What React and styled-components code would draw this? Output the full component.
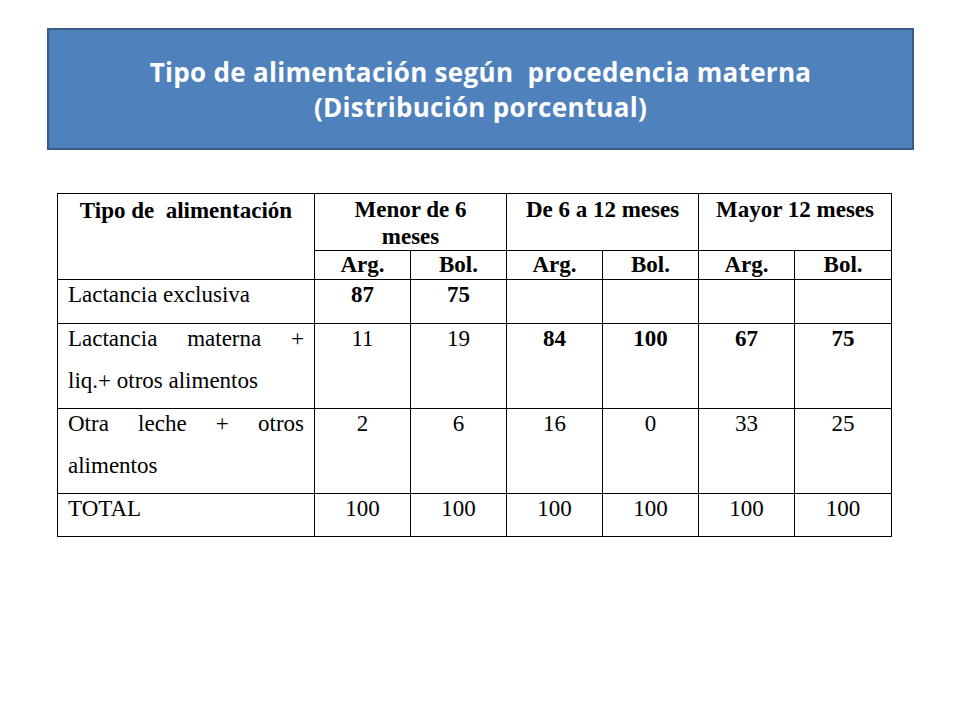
import React from "react";
import styled, { createGlobalStyle } from "styled-components";

const GlobalStyle = createGlobalStyle`
  html, body {
    margin: 0;
    padding: 0;
    background: #ffffff;
  }
`;

const Slide = styled.div`
  width: 960px;
  height: 720px;
  padding: 28px 0 0 47px;
  box-sizing: border-box;
`;

const TitleBox = styled.div`
  width: 867px;
  height: 122px;
  box-sizing: border-box;
  background: #4f81bd;
  border: 2px solid #385d8a;
  display: flex;
  flex-direction: column;
  align-items: center;
  justify-content: center;
  color: #ffffff;
  font-family: "Open Sans", "Liberation Sans", sans-serif;
  font-weight: 700;
  font-size: 26px;
  line-height: 35px;
  letter-spacing: 0.3px;
  padding-top: 2px;
`;

const Table = styled.table`
  margin: 43px 0 0 10px;
  border-collapse: collapse;
  table-layout: fixed;
  width: 834px;
  font-family: "Liberation Serif", "Times New Roman", serif;
  font-size: 23px;
  color: #000;
`;

const Col = styled.col`
  width: ${({ $w }) => $w}px;
`;

const HeadCell = styled.th`
  border: 1px solid #000;
  font-weight: 700;
  text-align: center;
  vertical-align: top;
  padding: ${({ $pad }) => $pad || "3px 4px 0"};
  line-height: 27px;
  height: ${({ $h }) => $h}px;
  box-sizing: border-box;
`;

const Cell = styled.td`
  border: 1px solid #000;
  vertical-align: top;
  text-align: ${({ $left }) => ($left ? "left" : "center")};
  font-weight: ${({ $bold }) => ($bold ? 700 : 400)};
  padding: 0 ${({ $left }) => ($left ? "10px" : "4px")};
  line-height: 30px;
  height: ${({ $h }) => $h}px;
  box-sizing: border-box;
`;

const Line = styled.div`
  height: 42px;
  line-height: 30px;
  text-align: ${({ $justify }) => ($justify ? "justify" : "left")};
  text-align-last: ${({ $justify }) => ($justify ? "justify" : "auto")};
`;

const colWidths = [257, 96, 96, 96, 96, 96, 97];

const rows = [
  {
    label: [["Lactancia exclusiva", false]],
    h: 44,
    values: [
      ["87", true],
      ["75", true],
      ["", false],
      ["", false],
      ["", false],
      ["", false],
    ],
  },
  {
    label: [
      ["Lactancia materna +", true],
      ["liq.+ otros alimentos", false],
    ],
    h: 84,
    values: [
      ["11", false],
      ["19", false],
      ["84", true],
      ["100", true],
      ["67", true],
      ["75", true],
    ],
  },
  {
    label: [
      ["Otra leche + otros", true],
      ["alimentos", false],
    ],
    h: 85,
    values: [
      ["2", false],
      ["6", false],
      ["16", false],
      ["0", false],
      ["33", false],
      ["25", false],
    ],
  },
  {
    label: [["TOTAL", false]],
    h: 43,
    values: [
      ["100", false],
      ["100", false],
      ["100", false],
      ["100", false],
      ["100", false],
      ["100", false],
    ],
  },
];

const groups = ["Menor de 6 meses", "De 6 a 12 meses", "Mayor 12 meses"];

export default function App() {
  return (
    <>
      <GlobalStyle />
      <Slide>
        <TitleBox>
          <div>Tipo de alimentación según&nbsp; procedencia materna</div>
          <div>(Distribución porcentual)</div>
        </TitleBox>
        <Table>
          <colgroup>
            {colWidths.map((w, i) => (
              <Col key={i} $w={w} />
            ))}
          </colgroup>
          <thead>
            <tr>
              <HeadCell rowSpan={2} $h={86}>
                Tipo de&nbsp; alimentación
              </HeadCell>
              {groups.map((g) => (
                <HeadCell key={g} colSpan={2} $h={57} $pad="2px 8px 0">
                  {g}
                </HeadCell>
              ))}
            </tr>
            <tr>
              {[0, 1, 2, 3, 4, 5].map((i) => (
                <HeadCell key={i} $h={29} $pad="0 4px">
                  {i % 2 ? "Bol." : "Arg."}
                </HeadCell>
              ))}
            </tr>
          </thead>
          <tbody>
            {rows.map((row, ri) => (
              <tr key={ri}>
                <Cell $left $h={row.h}>
                  {row.label.length === 1
                    ? row.label[0][0]
                    : row.label.map(([t, j]) => (
                        <Line key={t} $justify={j}>
                          {t}
                        </Line>
                      ))}
                </Cell>
                {row.values.map(([v, b], i) => (
                  <Cell key={i} $bold={b} $h={row.h}>
                    {v}
                  </Cell>
                ))}
              </tr>
            ))}
          </tbody>
        </Table>
      </Slide>
    </>
  );
}
